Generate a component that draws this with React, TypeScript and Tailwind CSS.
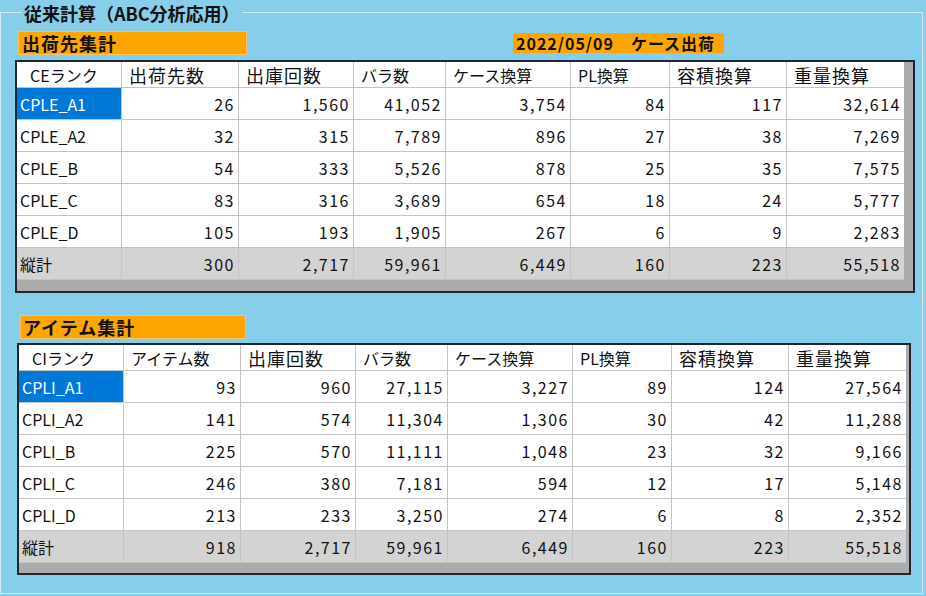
import React from "react";

const FONT = { fontFamily: '"Noto Sans CJK JP", "Noto Sans", sans-serif' };

type Row = { label: string; values: string[]; selected?: boolean; total?: boolean };

const WIDE = "text-[18px] tracking-[1px]";
const NARROW = "text-[16px]";

const t1Header: [string, string][] = [
  ["CEランク", NARROW],
  ["出荷先数", WIDE],
  ["出庫回数", WIDE],
  ["バラ数", NARROW],
  ["ケース換算", NARROW],
  ["PL換算", NARROW],
  ["容積換算", WIDE],
  ["重量換算", WIDE],
];
const t1Rows: Row[] = [
  { label: "CPLE_A1", values: ["26", "1,560", "41,052", "3,754", "84", "117", "32,614"], selected: true },
  { label: "CPLE_A2", values: ["32", "315", "7,789", "896", "27", "38", "7,269"] },
  { label: "CPLE_B", values: ["54", "333", "5,526", "878", "25", "35", "7,575"] },
  { label: "CPLE_C", values: ["83", "316", "3,689", "654", "18", "24", "5,777"] },
  { label: "CPLE_D", values: ["105", "193", "1,905", "267", "6", "9", "2,283"] },
  { label: "縦計", values: ["300", "2,717", "59,961", "6,449", "160", "223", "55,518"], total: true },
];

const t2Header: [string, string][] = [
  ["CIランク", NARROW],
  ["アイテム数", NARROW],
  ["出庫回数", WIDE],
  ["バラ数", NARROW],
  ["ケース換算", NARROW],
  ["PL換算", NARROW],
  ["容積換算", WIDE],
  ["重量換算", WIDE],
];
const t2Rows: Row[] = [
  { label: "CPLI_A1", values: ["93", "960", "27,115", "3,227", "89", "124", "27,564"], selected: true },
  { label: "CPLI_A2", values: ["141", "574", "11,304", "1,306", "30", "42", "11,288"] },
  { label: "CPLI_B", values: ["225", "570", "11,111", "1,048", "23", "32", "9,166"] },
  { label: "CPLI_C", values: ["246", "380", "7,181", "594", "12", "17", "5,148"] },
  { label: "CPLI_D", values: ["213", "233", "3,250", "274", "6", "8", "2,352"] },
  { label: "縦計", values: ["918", "2,717", "59,961", "6,449", "160", "223", "55,518"], total: true },
];

function DataGrid({ header, rows, widthClass }: { header: [string, string][]; rows: Row[]; widthClass: string }) {
  return (
    <div className={`border-2 border-[#1b2833] bg-[#ababab] h-[232px] ${widthClass}`}>
      <div className="grid grid-cols-[104px_116px_114px_91px_124px_98px_116px_117px] grid-rows-[25px_31px_31px_31px_31px_31px_31px] gap-px bg-[#c4c4c4] w-[887px] border-b border-[#c4c4c4]">
        {header.map(([h, cls], i) => (
          <div
            key={h}
            className={`bg-white flex items-center leading-none text-[#111] whitespace-nowrap ${cls} ${i === 0 ? "pl-[13px]" : "pl-[7px]"}`}
          >
            {h}
          </div>
        ))}
        {rows.map((r) => (
          <React.Fragment key={r.label}>
            <div
              className={`flex items-center pl-[3px] text-[16px] leading-none ${
                r.selected ? "bg-[#0078d7] text-white" : r.total ? "bg-[#d3d3d3] text-[#111]" : "bg-white text-[#111]"
              }`}
            >
              {r.label}
            </div>
            {r.values.map((v, i) => (
              <div
                key={i}
                className={`flex items-center justify-end pr-[3px] text-[16px] leading-none tracking-[1.5px] text-[#111] ${
                  r.total ? "bg-[#d3d3d3]" : "bg-white"
                }`}
              >
                {v}
              </div>
            ))}
          </React.Fragment>
        ))}
      </div>
    </div>
  );
}

export default function App() {
  return (
    <div className="w-[926px] h-[596px] bg-[#87ceeb] overflow-hidden" style={FONT}>
      <fieldset className="w-[923px] h-[594px] border border-[#cfeaf6] pl-[14px]">
        <legend className="ml-[7px] px-[2px] h-[24px] leading-[26px] text-[18px] font-bold text-[#111] whitespace-nowrap">
          従来計算（ABC分析応用）
        </legend>
        <div className="flex items-start h-[24px] mt-[7px]">
          <div className="ml-[3px] w-[229px] h-[24px] bg-[#ffa500] border border-[#f6c46a] flex items-center pl-[3px] text-[18px] font-bold leading-none text-[#111] tracking-[1px]">
            出荷先集計
          </div>
          <div className="ml-[266px] mt-[2px] w-[211px] h-[20px] bg-[#ffa500] flex items-center pl-[3px] text-[16px] font-bold leading-none text-[#111] whitespace-pre tracking-[1px]">
            2022/05/09　ケース出荷
          </div>
        </div>
        <div className="mt-[5px]">
          <DataGrid header={t1Header} rows={t1Rows} widthClass="w-[900px] h-[233px]" />
        </div>
        <div className="mt-[22px] h-[24px]">
          <div className="ml-[5px] w-[226px] h-[24px] bg-[#ffa500] border border-[#f6c46a] flex items-center pl-[2px] text-[18px] font-bold leading-none text-[#111] tracking-[1px]">
            アイテム集計
          </div>
        </div>
        <div className="mt-[4px] ml-[2px]">
          <DataGrid header={t2Header} rows={t2Rows} widthClass="w-[894px]" />
        </div>
      </fieldset>
    </div>
  );
}
